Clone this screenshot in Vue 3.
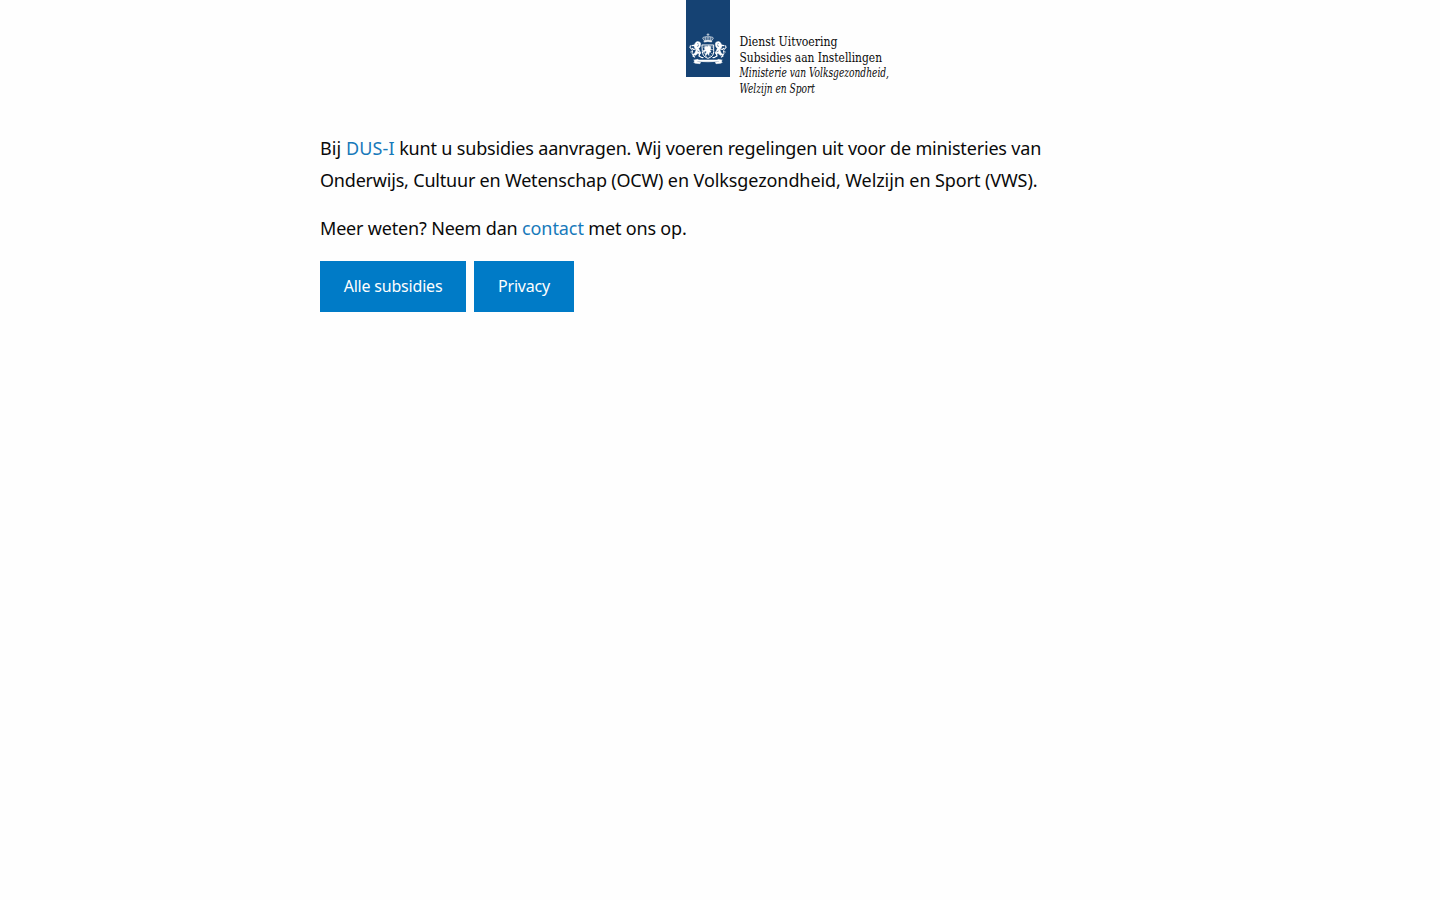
<script setup>
const buttons = ['Alle subsidies', 'Privacy']
</script>

<template>
  <div class="page">
    <header class="brand">
      <svg class="logo" width="210" height="101" viewBox="0 0 210 101" role="img" aria-label="Dienst Uitvoering Subsidies aan Instellingen">
        <rect width="44" height="77" fill="#154273" />
        <g transform="translate(-6 0) scale(.33333)" fill="none" stroke="#fff" stroke-linecap="round" stroke-linejoin="round">
          <!-- crown -->
          <path d="M84 101v6M81 104h6" stroke-width="2.4" opacity=".8" />
          <path d="M72 121l-4-6q1-5 7-4 5-3 9 0 4-3 9 0 6-1 7 4l-4 6z" fill="#fff" fill-opacity=".3" stroke-width="2.4" opacity=".8" />
          <path d="M77 120q-2-5 0-8M91 120q2-5 0-8M84 120v-9" stroke-width="2" opacity=".7" />
          <path d="M73 123q11-3 22 0v3q-11-3-22 0z" fill="#fff" stroke-width="1.6" />
          <!-- shield -->
          <path d="M67 135h34v20q0 15-17 20-17-5-17-20z" stroke-width="3" fill="#154273" />
          <path d="M77 139l5 1 4-3 6 3-1 5 3 2-4 4 3 5-5 1-2 9-4-6-5 7-1-6 4-5-4-3-5 4-1-5 6-4-3-4z" fill="#fff" stroke-width="2" />
          <path d="M72 141h1M96 141h1M72 159h2M95 161h1M95 149h2M77 169h2M90 168h1" stroke-width="3" opacity=".8" />
          <!-- supporting lions -->
          <g v-for="side in 2" :key="side" :transform="side === 2 ? 'matrix(-1 0 0 1 168 0)' : undefined">
            <path d="M46 129q3-5 9-4 7 0 7 8l-2 8-4 4 3 8 4 5-3 5-6-3-7 6-6-1 5-9 3-8-5-5-2-6z" fill="#fff" stroke-width="1.6" />
            <path d="M47 139l-5-3-6 1M48 147l-8 1-4-3M42 162l-3 6 5 3M59 160l-2 8 7 4 5 1" stroke-width="3.6" />
            <path d="M40 166q-7-3-3-9 2-5-3-9-4-4-3-11" stroke-width="2.6" />
            <path d="M31 144l-3-3M37 155l-5 1" stroke-width="2.4" />
            <path d="M53 131l2 1M52 139l4-2M53 153l4 2" stroke="#154273" stroke-width="1.8" />
          </g>
          <!-- motto ribbon -->
          <path d="M54 180h60v4q-30 3-60 0z" fill="#fff" stroke-width="1.6" />
          <path d="M42 180l12-2 2 4-6 3 12 2-2 4-14-1-5-3 3-3zM126 180l-12-2-2 4 6 3-12 2 2 4 14-1 5-3-3-3z" fill="#fff" stroke-width="1.4" />
        </g>
        <g class="name">
          <text x="53.5" y="46" textLength="98" lengthAdjust="spacingAndGlyphs">Dienst Uitvoering</text>
          <text x="53.5" y="61.5" textLength="142.5" lengthAdjust="spacingAndGlyphs">Subsidies aan Instellingen</text>
          <text class="ministry" x="53.5" y="77.2" textLength="149.5" lengthAdjust="spacingAndGlyphs">Ministerie van Volksgezondheid,</text>
          <text class="ministry" x="53.5" y="92.7" textLength="75.5" lengthAdjust="spacingAndGlyphs">Welzijn en Sport</text>
        </g>
      </svg>
    </header>
    <main>
      <p>
        <span class="line first"><span class="intro">Bij <a>DUS-I</a></span> kunt u subsidies aanvragen. Wij voeren regelingen uit voor de ministeries van</span>
        <span class="line second"><span class="opening">Onderwijs, Cultuur en Wetenschap (OCW)</span> en Volksgezondheid, Welzijn en Sport (VWS).</span>
      </p>
      <p><span class="line third">Meer weten? Neem dan <a class="contact">contact</a> met ons op.</span></p>
      <div class="actions">
        <button v-for="label in buttons" :key="label" :class="label === 'Privacy' ? 'short' : 'long'">{{ label }}</button>
      </div>
    </main>
  </div>
</template>

<style>
body {
  background: #fefefe;
}
</style>

<style scoped>
.page {
  box-sizing: border-box;
  width: 800px;
  margin: 0 auto;
  color: #0a0a0a;
  font-family: "Noto Sans", sans-serif;
}
.brand {
  height: 132px;
  padding-left: 366px;
}
.logo {
  display: block;
  overflow: visible;
}
.name {
  fill: #0a0a0a;
  font-family: "DejaVu Serif Condensed", "DejaVu Serif", serif;
  font-stretch: condensed;
  font-size: 12.8px;
}
.ministry {
  font-style: italic;
}
p {
  margin: 0 0 16px;
  font-size: 18px;
  line-height: 32px;
}
.line {
  display: block;
  width: max-content;
  white-space: nowrap;
}
.first {
  letter-spacing: -0.178px;
}
.intro {
  letter-spacing: 0.1px;
}
.second {
  letter-spacing: -0.09px;
}
.opening {
  letter-spacing: -0.2px;
}
.third {
  letter-spacing: -0.18px;
}
.contact {
  letter-spacing: -0.08px;
}
a {
  color: #1779ba;
}
.actions {
  display: flex;
  gap: 8px;
  margin-top: 17px;
}
button {
  height: 51px;
  padding: 0 0 2px;
  border: 0;
  background: #007bc7;
  color: #fefefe;
  font-family: "Noto Sans", sans-serif;
  font-size: 16px;
  letter-spacing: -0.2px;
}
.long {
  width: 146px;
}
.short {
  width: 100px;
}
</style>
